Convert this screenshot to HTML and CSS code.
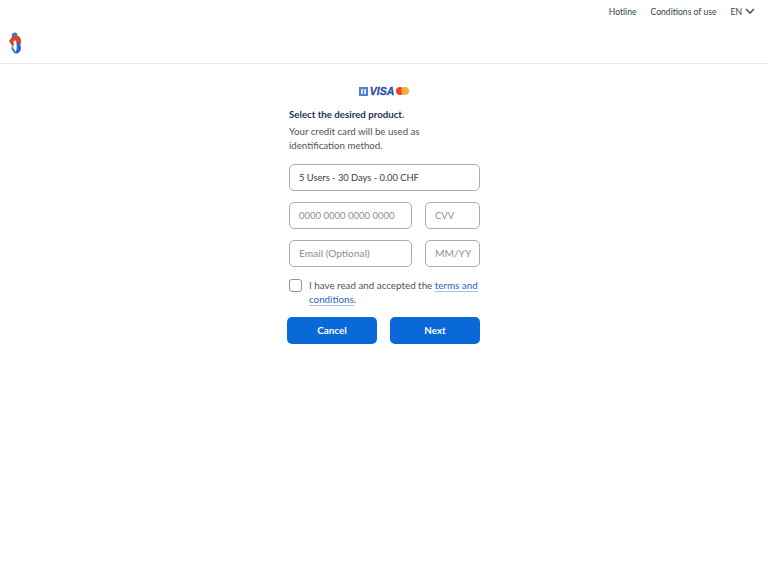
FILE: index.html
```html
<!DOCTYPE html>
<html lang="en">
<head>
<meta charset="utf-8">
<title>Select product</title>
<link rel="stylesheet" href="styles.css">
</head>
<body>
<header class="site-header">
  <nav class="top-nav">
    <a class="nav-link" href="#">Hotline</a>
    <a class="nav-link" href="#">Conditions of use</a>
    <span class="lang">EN
      <svg class="chev" width="10" height="7" viewBox="0 0 10 7"><path d="M1 1l4 4 4-4" fill="none" stroke="#4a5560" stroke-width="1.6"/></svg>
    </span>
  </nav>
  <div class="logo-row">
    <svg class="logo" width="14" height="22" viewBox="0 0 14 22">
      <path d="M3.500 3c.5-3 5-3.500 6-1L9 5 5 7z" fill="#2f83e6"/>
      <path d="M5 3.500c4-1 8 1 8 5.500 0 2-.3 3-1 4.500L9 9.500c-2-1.500-3-1-3.500.5L6 14 3.500 13 1 9z" fill="#d8452b"/>
      <path d="M8 9c3 1 5 4 5 7 0 3-2.500 6-5 5.500-1.500-.3-2.500-1-3-2.500l3 .5c1-3 1-6 0-10.500z" fill="#2a66c8"/>
      <path d="M4 13l3 6-2 .5-1.500-3z" fill="#3f78d2"/>
    </svg>
  </div>
</header>
<main class="content">
  <div class="card-logos">
    <svg class="maestro" width="9" height="9" viewBox="0 0 9 9"><rect width="9" height="9" fill="#4a80d8"/><rect x="2" y="2" width="5" height="5" fill="#dce8f9"/><path d="M4.500 2v5" stroke="#4a80d8"/></svg>
    <span class="visa">VISA</span>
    <span class="mc"><span class="mc-red"></span><span class="mc-yellow"></span></span>
  </div>
  <form class="form">
    <p class="title">Select the desired product.</p>
    <p class="intro">Your credit card will be used as identification method.</p>
    <div class="field field-full value">5 Users - 30 Days - 0.00 CHF</div>
    <div class="row">
      <div class="field field-wide">0000 0000 0000 0000</div>
      <div class="field field-small">CVV</div>
    </div>
    <div class="row">
      <div class="field field-wide field-text">Email (Optional)</div>
      <div class="field field-small field-text">MM/YY</div>
    </div>
    <div class="terms">
      <span class="checkbox"></span>
      <p class="terms-text">I have read and accepted the <a href="#">terms and</a><br><a href="#">conditions</a>.</p>
    </div>
    <div class="actions">
      <button class="btn btn-cancel" type="button">Cancel</button>
      <button class="btn btn-next" type="button">Next</button>
    </div>
  </form>
</main>
</body>
</html>
```
FILE: styles.css
```css
* { box-sizing: border-box; }
html, body { margin: 0; padding: 0; background: #fff; }
body { font-family: Lato, "Noto Sans", sans-serif; color: #333e48; height: 575px; overflow: hidden; }
.site-header { height: 64px; border-bottom: 1px solid #e6e8ea; }
.top-nav { display: flex; justify-content: flex-end; align-items: center; gap: 14px; height: 23px; padding-right: 13px; font-size: 8.600px; }
.nav-link { color: #333e48; text-decoration: none; }
.lang { display: flex; align-items: center; gap: 3px; }
.chev { display: block; }
.logo-row { padding: 9px 0 0 7.500px; }
.logo { display: block; }
.content { display: flex; flex-direction: column; align-items: center; }
.card-logos { display: flex; align-items: center; gap: 2px; height: 12px; margin-top: 21px; }
.maestro { display: block; }
.visa { font-family: "Liberation Sans", sans-serif; font-weight: 700; font-style: italic; font-size: 10.500px; color: #2650a8; line-height: 12px; -webkit-text-stroke: .3px #2650a8; }
.mc { display: flex; }
.mc-red, .mc-yellow { width: 8px; height: 8px; border-radius: 50%; display: block; }
.mc-red { background: #e8452a; }
.mc-yellow { background: #f6a623; margin-left: -3px; opacity: .9; }
.form { width: 192px; margin-top: 10px; display: flex; flex-direction: column; }
.title { margin: 0 0 0 1px; font-size: 9.700px; line-height: 14px; font-weight: 700; color: #24344d; }
.intro { margin: 4px 30px 0 1px; font-size: 9.700px; line-height: 13.500px; color: #4a5560; }
.field { height: 27px; border: 1px solid #a9adb1; border-radius: 5px; font-size: 9.500px; line-height: 25px; padding-left: 9px; color: #8a8f94; background: #fff; }
.field-text { font-size: 10.200px; }
.value { color: #333e48; font-size: 9.300px; }
.field-full { margin: 12px 0 0 1px; }
.row { display: flex; justify-content: space-between; margin: 11px 0 0 1px; }
.field-wide { width: 123px; }
.field-small { width: 55px; }
.terms { display: flex; margin: 12px 0 0 1px; gap: 7px; align-items: flex-start; }
.checkbox { width: 13px; height: 13px; border: 1px solid #8f9499; border-radius: 3px; flex: none; }
.terms-text { margin: -1px 0 0; font-size: 9.800px; line-height: 14px; color: #4a5560; }
.terms-text a { color: #2a5fc0; text-decoration: none; border-bottom: 1px solid #a9bfe8; }
.actions { display: flex; justify-content: space-between; margin-top: 11px; }
.btn { height: 27px; border: 0; border-radius: 5px; background: #0a69d9; color: #fff; font-family: inherit; font-size: 9.800px; font-weight: 700; padding: 0 0 2px; }
.btn-cancel { width: 90px; margin-left: -1px; }
.btn-next { width: 90px; }
```
